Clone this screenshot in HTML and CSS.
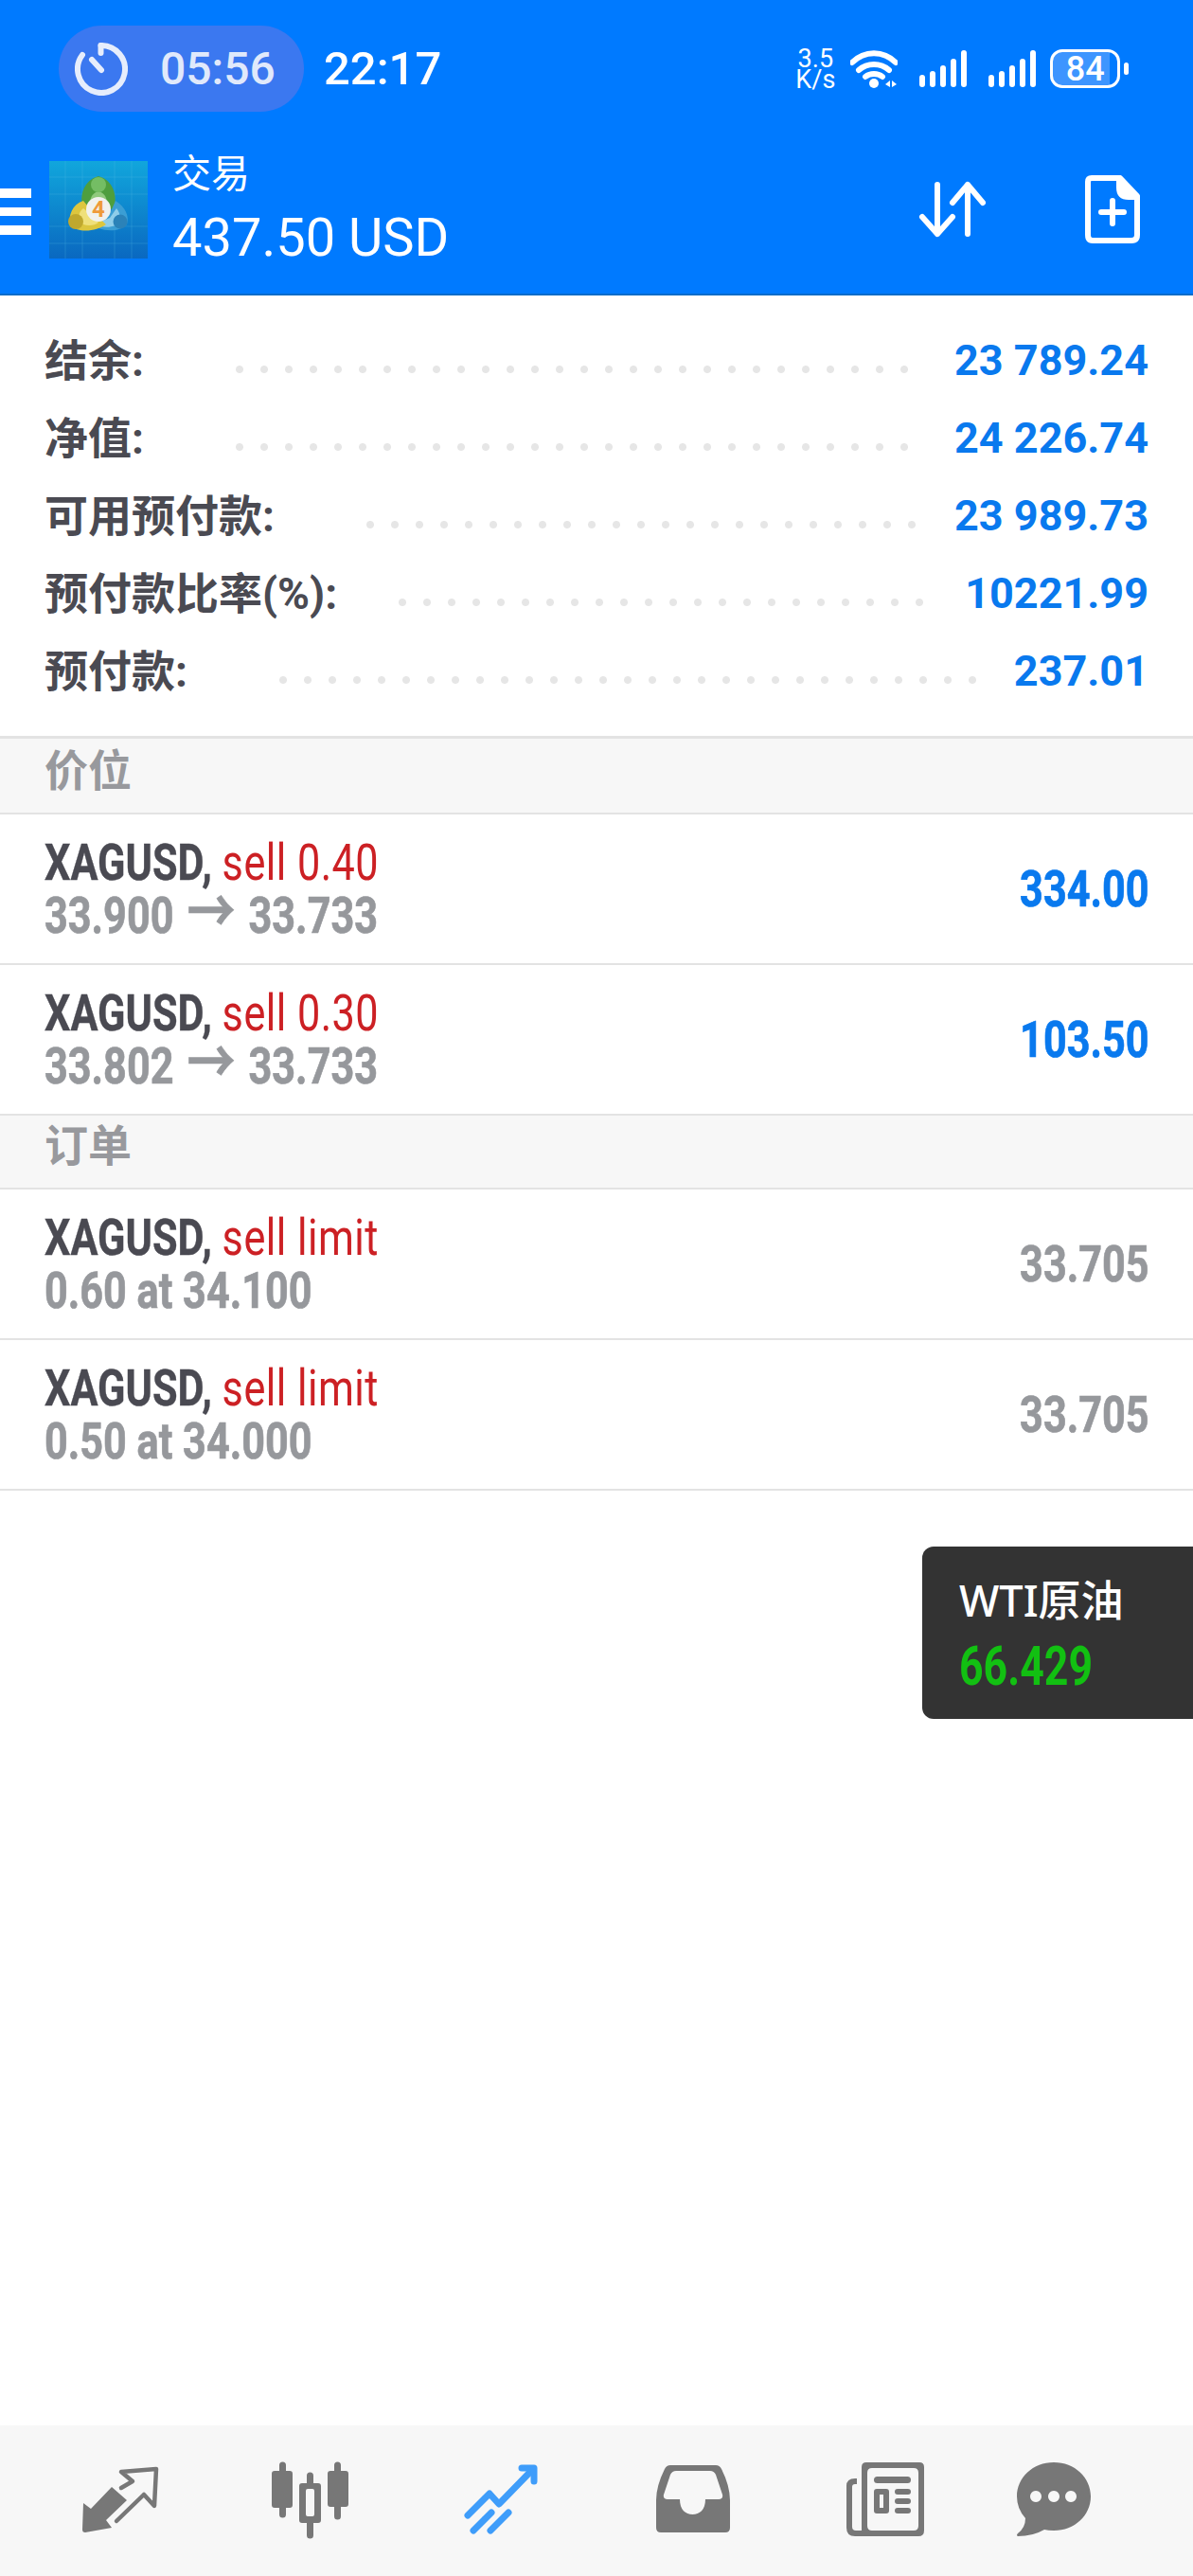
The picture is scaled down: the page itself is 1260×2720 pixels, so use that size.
FILE: index.html
```html
<!DOCTYPE html>
<html lang="zh">

<head>
    <meta charset="UTF-8">
    <title>交易</title>
    <link rel="stylesheet" href="styles.css">
</head>

<body>
    <header class="top">
        <div class="status">
            <div class="pill">
                <svg class="timer" viewBox="0 0 56 56"><path d="M27.500 3A25 25 0 1 1 8 13" /><path d="M27.500 3V11" /><path d="M18 18L28 29" /></svg>
                <span class="pill-time">05:56</span>
            </div>
            <span class="clock">22:17</span>
            <div class="netspeed"><span>3.5</span><span>K/s</span></div>
            <svg class="wifi" viewBox="897 51 50 42">
                <path class="arc" d="M899 65C912 52 932 52 945 65" />
                <path class="arc" d="M906 73C915 65 929 65 938 73" />
                <path class="arc" d="M913 80C918 76 926 76 931 80" />
                <circle cx="922" cy="87" r="5" />
                <path d="M939 84V91L934 88ZM941 84V91L946 88Z" />
            </svg>
            <svg class="signal" viewBox="0 0 50 40"><rect x="0" y="26" width="6" height="13" rx="3" /><rect x="11" y="22" width="6" height="17" rx="3" /><rect x="22" y="16" width="6" height="23" rx="3" /><rect x="33" y="9" width="6" height="30" rx="3" /><rect x="44" y="0" width="6" height="39" rx="3" /></svg>
            <svg class="signal" viewBox="0 0 50 40"><rect x="0" y="26" width="6" height="13" rx="3" /><rect x="11" y="22" width="6" height="17" rx="3" /><rect x="22" y="16" width="6" height="23" rx="3" /><rect x="33" y="9" width="6" height="30" rx="3" /><rect x="44" y="0" width="6" height="39" rx="3" /></svg>
            <div class="battery"><span class="battery-level">84</span></div>
            <div class="battery-nub"></div>
        </div>
        <div class="appbar">
            <div class="burger"><i></i><i></i><i></i></div>
            <svg class="logo" viewBox="0 0 104 103">
                <defs>
                    <linearGradient id="sky" x1="0" y1="0" x2="0" y2="1"><stop offset="0" stop-color="#11a6dc" /><stop offset="1" stop-color="#0a68c0" /></linearGradient>
                </defs>
                <rect width="104" height="103" fill="url(#sky)" />
                <path d="M17 0V103M35 0V103M69 0V103M87 0V103M0 17H104M0 35H104M0 69H104M0 87H104" stroke="#5cc0ea" stroke-opacity=".25" fill="none" />
                <path d="M52 16C37 20 31 36 36 52L52 44 68 52C73 36 67 20 52 16Z" fill="#4e9e3e" />
                <path d="M52 32C44 34 42 42 44 48L60 48C62 42 60 34 52 32Z" fill="#8fc97c" />
                <circle cx="52" cy="25" r="8" fill="#74bd64" />
                <path d="M70 42C80 48 85 58 82 67 72 77 52 74 42 65L62 60Z" fill="#3b9ed4" />
                <path d="M71 50C76 56 76 63 70 68 62 71 54 70 50 66L64 60Z" fill="#8fcdea" />
                <circle cx="75" cy="64" r="7.500" fill="#2b82b8" />
                <path d="M36 42C24 46 20 58 22 68 32 77 50 74 60 67L46 54Z" fill="#dcc63e" />
                <path d="M36 50C30 54 30 62 36 67 42 69 48 68 52 65L42 55Z" fill="#efe07a" />
                <circle cx="28" cy="64" r="8" fill="#bfa82e" />
                <circle cx="52" cy="51" r="13" fill="#f1f1ee" />
                <text x="52" y="59" class="logo-four">4</text>
            </svg>
            <div class="title">
                <div class="title-name">交易</div>
                <div class="title-profit">437.50 USD</div>
            </div>
            <svg class="sort" viewBox="969 190 74 62">
                <path d="M990 195V247M974 229L990 247 1006 229" />
                <path d="M1022 247V195M1006 214L1022 195 1038 214" />
            </svg>
            <svg class="newdoc" viewBox="1145 185 60 73">
                <path d="M1153 188H1183L1201 207V248Q1201 254 1195 254H1154Q1149 254 1149 248V192Q1149 188 1153 188Z" />
                <path class="newdoc-fold" d="M1182 188V198Q1182 208 1192 208H1201Z" />
                <path d="M1175 212V236M1163 224H1187" />
            </svg>
        </div>
    </header>

    <section class="summary">
        <div class="sum-row"><span class="sum-label">结余:</span><span class="leader"></span><span class="sum-value">23 789.24</span></div>
        <div class="sum-row"><span class="sum-label">净值:</span><span class="leader"></span><span class="sum-value">24 226.74</span></div>
        <div class="sum-row"><span class="sum-label">可用预付款:</span><span class="leader"></span><span class="sum-value">23 989.73</span></div>
        <div class="sum-row"><span class="sum-label">预付款比率(%):</span><span class="leader leader-tight"></span><span class="sum-value">10221.99</span></div>
        <div class="sum-row"><span class="sum-label">预付款:</span><span class="leader"></span><span class="sum-value">237.01</span></div>
    </section>

    <div class="group">价位</div>
    <div class="item">
        <div class="item-text">
            <div class="line-one"><b>XAGUSD,</b> <span class="side">sell 0.40</span></div>
            <div class="line-two">33.900 <span class="arrow">→</span> 33.733</div>
        </div>
        <div class="amount amount-blue">334.00</div>
    </div>
    <div class="item">
        <div class="item-text">
            <div class="line-one"><b>XAGUSD,</b> <span class="side">sell 0.30</span></div>
            <div class="line-two">33.802 <span class="arrow">→</span> 33.733</div>
        </div>
        <div class="amount amount-blue">103.50</div>
    </div>

    <div class="group group-orders">订单</div>
    <div class="item">
        <div class="item-text">
            <div class="line-one"><b>XAGUSD,</b> <span class="side">sell limit</span></div>
            <div class="line-two">0.60 at 34.100</div>
        </div>
        <div class="amount">33.705</div>
    </div>
    <div class="item">
        <div class="item-text">
            <div class="line-one"><b>XAGUSD,</b> <span class="side">sell limit</span></div>
            <div class="line-two">0.50 at 34.000</div>
        </div>
        <div class="amount">33.705</div>
    </div>

    <div class="tip">
        <div class="tip-name">WTI原油</div>
        <div class="tip-price">66.429</div>
    </div>

    <nav class="tabs">
        <svg class="tab" viewBox="26 2561 202 159">
            <path class="fill" d="M88 2643L96 2649 118 2626 134 2640 112 2661 118 2669 90 2674Q87 2674 87 2671Z" />
            <path class="line" d="M128 2627L140 2620 128 2610 165 2607 163 2646 152 2634 123 2662" stroke-width="4.500" />
        </svg>
        <svg class="tab" viewBox="228 2561 202 159">
            <path class="fill" d="M295 2603a3.500 3.500 0 0 1 7 0V2609H306Q309 2609 309 2612V2645Q309 2648 306 2648H302V2655a3.500 3.500 0 0 1 -7 0V2648H290Q287 2648 287 2645V2612Q287 2609 290 2609H295Z" />
            <path class="fill" d="M324 2614a3.500 3.500 0 0 1 7 0V2622H336Q339 2622 339 2625V2661Q339 2664 336 2664H331V2677a3.500 3.500 0 0 1 -7 0V2664H319Q316 2664 316 2661V2625Q316 2622 319 2622H324ZM325 2628Q323 2628 323 2630V2655Q323 2657 325 2657H330Q332 2657 332 2655V2630Q332 2628 330 2628Z" fill-rule="evenodd" />
            <path class="fill" d="M353 2603a3.500 3.500 0 0 1 7 0V2609H365Q368 2609 368 2612V2644Q368 2647 365 2647H360V2657a3.500 3.500 0 0 1 -7 0V2647H349Q346 2647 346 2644V2612Q346 2609 349 2609H353Z" />
        </svg>
        <svg class="tab tab-on" viewBox="430 2561 202 159">
            <path class="line" d="M494 2656L517 2633 527 2644 563 2607" stroke-width="7" />
            <path class="line" d="M551 2606H564V2620" stroke-width="7" />
            <path class="line" d="M500 2672L519 2653M518 2672L537 2653" stroke-width="7" />
        </svg>
        <svg class="tab" viewBox="632 2561 202 159">
            <path class="fill" fill-rule="evenodd" d="M708 2603H756Q760 2603 762 2607 771 2625 771 2640V2669Q771 2674 766 2674H698Q693 2674 693 2669V2640Q693 2625 702 2607 704 2603 708 2603ZM714 2609Q710 2609 708 2613L701 2634Q700 2639 705 2639H718C718 2650 724 2655 731.500 2655S745 2650 745 2639H759Q764 2639 763 2634L756 2613Q754 2609 750 2609Z" />
        </svg>
        <svg class="tab" viewBox="834 2561 202 159">
            <path class="fill" fill-rule="evenodd" d="M915 2600H971Q976 2600 976 2605V2672Q976 2678 970 2678H903Q894 2678 894 2669V2625Q894 2617 903 2617H905V2623H903Q900 2623 900 2626V2668Q900 2672 904 2672H910V2605Q910 2600 915 2600ZM921 2606Q916 2606 916 2611V2667Q916 2672 921 2672H965Q970 2672 970 2667V2611Q970 2606 965 2606Z" />
            <rect class="fill" x="923" y="2615" width="39" height="7" rx="3.500" />
            <path class="fill" fill-rule="evenodd" d="M926 2628H936Q939 2628 939 2631V2651Q939 2654 936 2654H926Q923 2654 923 2651V2631Q923 2628 926 2628ZM929 2634V2648H933V2634Z" />
            <rect class="fill" x="945" y="2628" width="17" height="6" rx="3" />
            <rect class="fill" x="945" y="2638" width="17" height="6" rx="3" />
            <rect class="fill" x="945" y="2648" width="17" height="6" rx="3" />
        </svg>
        <svg class="tab" viewBox="1036 2561 202 159">
            <path class="fill" fill-rule="evenodd" d="M1113 2600C1135 2600 1152 2616 1152 2636S1135 2672 1113 2672Q1107 2672 1103 2671 1091 2678 1075 2678 1073 2677 1075 2675 1083 2669 1083 2659 1074 2649 1074 2636C1074 2616 1091 2600 1113 2600ZM1094 2630a6 6 0 1 0 .01 0ZM1113 2630a6 6 0 1 0 .01 0ZM1131 2630a6 6 0 1 0 .01 0Z" />
        </svg>
    </nav>
</body>

</html>
```

FILE: styles.css
```css
/* phone screen */

html,
body {
    margin: 0;
    padding: 0;
}

body {
    position: relative;
    width: 1260px;
    height: 2720px;
    overflow: hidden;
    background-color: #fff;
    font-family: Roboto, "Noto Sans CJK SC", sans-serif;
    color: #4a4a52;
}

.top {
    height: 310px;
    background-color: #007aff;
    border-bottom: 2px solid #0a6cc9;
    color: #fff;
}

.status {
    display: flex;
    align-items: center;
    height: 91px;
    padding: 27px 0 0 62px;
}

.pill {
    display: flex;
    align-items: center;
    flex: none;
    width: 259px;
    height: 91px;
    box-sizing: border-box;
    padding-left: 17px;
    border-radius: 46px;
    background-color: #3b78f0;
    color: #e0e9fb;
}

.timer {
    width: 56px;
    height: 56px;
    fill: none;
    stroke: #e6edfc;
    stroke-width: 6;
    stroke-linecap: round;
}

.pill-time {
    margin-left: 34px;
    font-size: 48px;
    font-weight: 500;
}

.clock {
    margin-left: 21px;
    font-size: 49px;
    font-weight: 500;
}

.netspeed {
    display: flex;
    flex-direction: column;
    align-items: center;
    width: 40px;
    margin-left: 375px;
    font-size: 27px;
    line-height: 22px;
}

.wifi {
    width: 50px;
    height: 42px;
    margin-left: 17px;
    fill: #fff;
}

.wifi .arc {
    fill: none;
    stroke: #fff;
    stroke-width: 6;
    stroke-linecap: round;
}

.signal {
    width: 50px;
    height: 40px;
    margin-left: 23px;
    fill: #fff;
}

.battery {
    display: flex;
    align-items: center;
    justify-content: center;
    width: 74px;
    height: 41px;
    box-sizing: border-box;
    margin-left: 15px;
    border: 3px solid #fff;
    border-radius: 13px;
    background: linear-gradient(90deg, #3d95ff 88%, transparent 88%);
}

.battery-level {
    font-size: 36px;
    font-weight: 500;
    line-height: 1;
}

.battery-nub {
    width: 5px;
    height: 13px;
    margin-left: 4px;
    border-radius: 3px;
    background-color: #fff;
}

.appbar {
    display: flex;
    align-items: flex-start;
    height: 192px;
}

.burger {
    display: flex;
    flex-direction: column;
    gap: 10px;
    width: 33px;
    margin-top: 81px;
}

.burger i {
    display: block;
    height: 9.500px;
    background-color: #fff;
}

.logo {
    flex: none;
    width: 104px;
    height: 103px;
    margin: 52px 0 0 19px;
}

.logo-four {
    font-size: 24px;
    font-weight: 700;
    fill: #ef9a3a;
    text-anchor: middle;
}

.title {
    flex: 1;
    margin: 41px 0 0 26px;
}

.title-name {
    font-size: 41px;
    line-height: 50px;
}

.title-profit {
    font-size: 56px;
    line-height: 66px;
    margin-top: 9px;
}

.sort {
    flex: none;
    width: 74px;
    height: 62px;
    margin-top: 72px;
    fill: none;
    stroke: #fff;
    stroke-width: 6;
    stroke-linecap: round;
    stroke-linejoin: round;
}

.newdoc {
    flex: none;
    width: 60px;
    height: 73px;
    margin: 67px 55px 0 102px;
    fill: none;
    stroke: #fff;
    stroke-width: 6;
    stroke-linecap: round;
    stroke-linejoin: round;
}

.newdoc-fold {
    fill: #fff;
}

.summary {
    height: 468px;
    padding-top: 27px;
    box-sizing: border-box;
    border-bottom: 3px solid #e3e3e3;
}

.sum-row {
    display: flex;
    align-items: center;
    height: 82px;
    padding: 0 47px;
}

.sum-label {
    margin-bottom: 6px;
    font-size: 46px;
    font-weight: 700;
    white-space: nowrap;
}

.leader {
    flex: 1;
    height: 8px;
    margin: 20px 38px 0 88px;
    background: radial-gradient(circle, #e6e6e6 3.500px, transparent 4.500px) 0 0 / 26px 8px repeat-x;
}

.leader-tight {
    margin-left: 56px;
}

.sum-value {
    font-size: 45px;
    font-weight: 700;
    color: #0979ee;
}

.group {
    height: 78px;
    padding-left: 47px;
    background-color: #f7f7f7;
    border-bottom: 2px solid #e3e3e3;
    font-size: 46px;
    font-weight: 700;
    line-height: 68px;
    color: #98999d;
}

.group-orders {
    height: 76px;
    line-height: 65px;
}

.item {
    display: flex;
    align-items: center;
    justify-content: space-between;
    height: 157px;
    padding: 0 46px 0 47px;
    border-bottom: 2px solid #e3e3e3;
}

.line-one,
.line-two {
    width: 600px;
    transform: scaleX(.8);
    transform-origin: left center;
    white-space: nowrap;
    font-size: 54px;
    line-height: 56px;
}

.line-one b {
    font-weight: 700;
    -webkit-text-stroke: .4px #4a4a52;
}

.side {
    color: #cc2024;
    letter-spacing: .6px;
}

.line-two {
    font-weight: 700;
    color: #96989c;
    -webkit-text-stroke: .7px #96989c;
}

.arrow {
    margin: 0 4px;
    font-size: 64px;
    line-height: 0;
}

.amount {
    font-size: 54px;
    font-weight: 700;
    color: #96989c;
    -webkit-text-stroke: .7px #96989c;
    transform: scaleX(.8);
    transform-origin: right center;
}

.amount-blue {
    color: #0979ee;
    -webkit-text-stroke: .7px #0979ee;
}

.tip {
    position: absolute;
    top: 1633px;
    right: 0;
    width: 286px;
    height: 182px;
    padding: 30px 0 0 39px;
    box-sizing: border-box;
    border-radius: 12px 0 0 12px;
    background-color: #333;
}

.tip-name {
    font-size: 45px;
    font-weight: 500;
    line-height: 54px;
    color: #fff;
    font-family: "Noto Sans", "Noto Sans CJK SC", sans-serif;
}

.tip-price {
    width: 200px;
    margin-top: 9px;
    font-size: 58px;
    line-height: 66px;
    font-weight: 700;
    color: #12c012;
    transform: scaleX(.77);
    transform-origin: left center;
}

.tabs {
    position: absolute;
    left: 0;
    right: 0;
    bottom: 0;
    display: flex;
    height: 159px;
    padding-left: 26px;
    background-color: #f7f7f7;
}

.tab {
    width: 202px;
    height: 159px;
    flex: none;
}

.tab .fill {
    fill: #777;
}

.tab .line {
    fill: none;
    stroke: #777;
    stroke-linecap: round;
    stroke-linejoin: round;
}

.tab-on .line {
    stroke: #3f9dfa;
}
```
